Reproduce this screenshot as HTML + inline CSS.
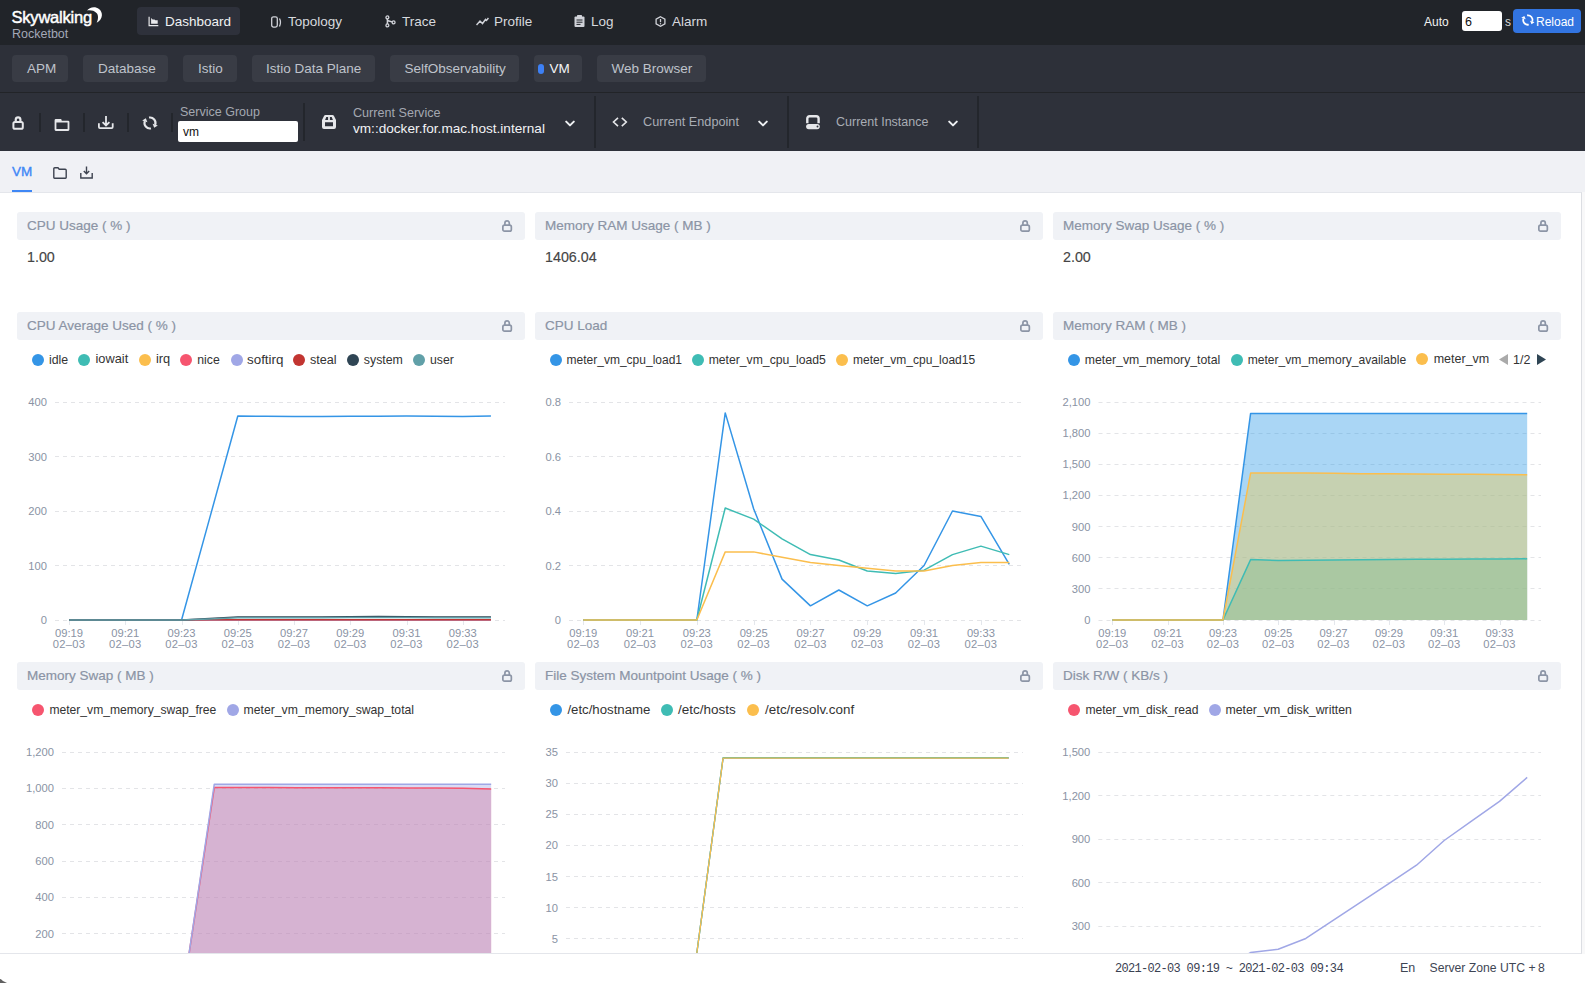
<!DOCTYPE html><html><head><meta charset="utf-8"><title>Rocketbot</title><style>
*{box-sizing:border-box;margin:0;padding:0}
html,body{width:1585px;height:983px;overflow:hidden;background:#fff;font-family:"Liberation Sans", sans-serif;}
.abs{position:absolute}
.t{position:absolute;white-space:nowrap;line-height:1}
#nav{position:absolute;left:0;top:0;width:1585px;height:45px;background:#212429}
#tabs{position:absolute;left:0;top:45px;width:1585px;height:47px;background:#2d3039}
#tline{position:absolute;left:0;top:92px;width:1585px;height:1px;background:#222428}
#tool{position:absolute;left:0;top:93px;width:1585px;height:58px;background:#2e313a}
#sub{position:absolute;left:0;top:151px;width:1585px;height:41px;background:#f0f1f5}
#content{position:absolute;left:0;top:192px;width:1582px;height:762px;background:#fff;border-top:1px solid #e4e6eb;border-right:1px solid #dcdee3;border-bottom:1px solid #e4e6eb;overflow:hidden}
#foot{position:absolute;left:0;top:954px;width:1585px;height:29px;background:#fff}
.tab{position:absolute;top:55px;height:27px;background:#393c45;border-radius:4px}
.tabt{position:absolute;top:62px;font-size:13.5px;color:#c4c7ce;line-height:1;white-space:nowrap}
.sep{position:absolute;width:2px;background:#23262c}
.ph{position:absolute;height:28px;width:508px;background:#f0f2f6;border-radius:3px}
.pt{position:absolute;font-size:13.5px;color:#8b94a5;-webkit-text-stroke:0.2px #8b94a5;line-height:1;white-space:nowrap}
.pv{position:absolute;font-size:14.3px;color:#454545;-webkit-text-stroke:0.15px #454545;line-height:1;white-space:nowrap}
.lg{position:absolute;width:12px;height:12px;border-radius:6px}
.lt{position:absolute;font-size:12.5px;color:#333;line-height:1;white-space:nowrap}
</style></head><body>
<div id="nav"></div>
<div class="t" style="left:11.5px;top:9.2px;font-size:16.5px;color:#fff;letter-spacing:-0.2px;-webkit-text-stroke:0.45px #fff">Skywalking</div>
<svg class="abs" style="left:86px;top:6px" width="18" height="18" viewBox="0 0 18 18"><path d="M1.1 4.6 C3 1.5 9 0 13 3 C17 6 17.5 13 10.7 16.8 C12.5 13 12.5 9 10.5 7 C8 4.5 4 4 1.1 4.6 Z" fill="#fff"/></svg>
<div class="t" style="left:12px;top:28.2px;font-size:12.5px;color:#a3a8b8">Rocketbot</div>
<div class="abs" style="left:137px;top:7px;width:103px;height:28px;background:#2e313b;border-radius:4px"></div>
<svg class="abs" style="left:148px;top:16px" width="11" height="11" viewBox="0 0 11 11"><path d="M1.1 0.7V9.7H10.3" stroke="#e8e9ec" stroke-width="1.2" fill="none"/><path d="M3.1 7.8V2L4.6 3.4H6.5L7.3 4.2H9.7V7.8Z" fill="#e8e9ec"/></svg>
<div class="t" style="left:165px;top:14.5px;font-size:13.5px;color:#f0f1f3">Dashboard</div>
<svg class="abs" style="left:271px;top:15.5px" width="12" height="12" viewBox="0 0 12 12"><rect x="0.7" y="0.8" width="5.6" height="10.3" rx="1.8" stroke="#d0d2d8" stroke-width="1.3" fill="none"/><path d="M8.5 2.5 Q10.5 6 8.5 10.5" stroke="#d0d2d8" stroke-width="1.3" fill="none"/></svg>
<div class="t" style="left:288px;top:14.5px;font-size:13.5px;color:#d7d9de">Topology</div>
<svg class="abs" style="left:385px;top:15px" width="12" height="13" viewBox="0 0 12 13"><path d="M2.4 2.4V10.4M2.4 5.5L8.6 7.4" stroke="#d0d2d8" stroke-width="1.5" fill="none"/><circle cx="2.4" cy="2.4" r="1.45" stroke="#d0d2d8" stroke-width="1.3" fill="#212429"/><circle cx="2.4" cy="10.4" r="1.45" stroke="#d0d2d8" stroke-width="1.3" fill="#212429"/><circle cx="8.6" cy="7.4" r="1.45" stroke="#d0d2d8" stroke-width="1.3" fill="#212429"/></svg>
<div class="t" style="left:402px;top:14.5px;font-size:13.5px;color:#d7d9de">Trace</div>
<svg class="abs" style="left:476px;top:17px" width="13" height="9" viewBox="0 0 13 9"><path d="M0.5 8 L4 4 L6.5 6.5 L9.5 2.5 L10.5 3.5 L12.5 1" stroke="#d0d2d8" stroke-width="1.5" fill="none"/></svg>
<div class="t" style="left:494px;top:14.5px;font-size:13.5px;color:#d7d9de">Profile</div>
<svg class="abs" style="left:574px;top:15px" width="11" height="12" viewBox="0 0 11 12"><rect x="0.5" y="1.5" width="10" height="10.5" rx="1" fill="#d0d2d8"/><rect x="3" y="0" width="5" height="2.5" rx="0.6" fill="#d0d2d8"/><path d="M2.5 5H8.5M2.5 7.2H8.5M2.5 9.4H6.5" stroke="#212429" stroke-width="1"/></svg>
<div class="t" style="left:591px;top:14.5px;font-size:13.5px;color:#d7d9de">Log</div>
<svg class="abs" style="left:655px;top:16px" width="11" height="11" viewBox="0 0 11 11"><path d="M5.5 0.7 L9.9 3.1 V7.9 L5.5 10.3 L1.1 7.9 V3.1Z" stroke="#d0d2d8" stroke-width="1.3" fill="none"/><path d="M5.5 3V6.2" stroke="#d0d2d8" stroke-width="1.3"/><circle cx="5.5" cy="7.8" r="0.7" fill="#d0d2d8"/></svg>
<div class="t" style="left:672px;top:14.5px;font-size:13.5px;color:#d7d9de">Alarm</div>
<div class="t" style="left:1424px;top:16px;font-size:12px;color:#f2f2f2">Auto</div>
<div class="abs" style="left:1462px;top:11px;width:40px;height:20px;background:#fff;border-radius:3px"></div>
<div class="t" style="left:1465px;top:16px;font-size:12.5px;color:#111">6</div>
<div class="t" style="left:1505px;top:16px;font-size:12px;color:#d8d8d8">s</div>
<div class="abs" style="left:1513px;top:9px;width:68px;height:24px;background:#3274e0;border-radius:4px"></div>
<svg class="abs" style="left:1516.1px;top:9.2px" width="23.8" height="21.25" viewBox="0 0 28 25"><path d="M13.04 7.58 A5.5 5.5 0 0 1 19.17 14.88" stroke="#fff" stroke-width="2.1" fill="none"/><path d="M14.96 18.42 A5.5 5.5 0 0 1 8.83 11.12" stroke="#fff" stroke-width="2.1" fill="none"/><path d="M18.2 17.8 L21.8 15.6 L16.6 13.8Z" fill="#fff"/><path d="M9.8 8.2 L6.2 10.4 L11.4 12.2Z" fill="#fff"/></svg>
<div class="t" style="left:1536px;top:16px;font-size:12px;color:#fff">Reload</div>
<div id="tabs"></div><div id="tline"></div>
<div class="tab" style="left:12px;width:56px"></div>
<div class="tabt" style="left:27px;color:#bfc3cb">APM</div>
<div class="tab" style="left:83px;width:85px"></div>
<div class="tabt" style="left:98px;color:#bfc3cb">Database</div>
<div class="tab" style="left:183px;width:54px"></div>
<div class="tabt" style="left:198px;color:#bfc3cb">Istio</div>
<div class="tab" style="left:252px;width:123px"></div>
<div class="tabt" style="left:266px;color:#bfc3cb">Istio Data Plane</div>
<div class="tab" style="left:390px;width:129px"></div>
<div class="tabt" style="left:404.5px;color:#bfc3cb">SelfObservability</div>
<div class="tab" style="left:534px;width:48px"></div>
<div class="tabt" style="left:549.5px;color:#f4f5f7">VM</div>
<div class="tab" style="left:597px;width:109px"></div>
<div class="tabt" style="left:611.5px;color:#bfc3cb">Web Browser</div>
<div class="abs" style="left:538px;top:64px;width:6px;height:10px;background:#3d80f5;border-radius:3px"></div>
<div id="tool"></div>
<svg class="abs" style="left:12px;top:115px" width="13" height="16" viewBox="0 0 13 16"><path d="M3.75 7V4.5A2.33 2.33 0 0 1 8.4 4.5V7" stroke="#e6e7ea" stroke-width="2.2" fill="none"/><rect x="1.4" y="6.9" width="9.4" height="6.9" rx="1.6" stroke="#e6e7ea" stroke-width="2" fill="none"/></svg>
<div class="sep" style="left:39px;top:113px;height:19px"></div>
<div class="sep" style="left:83px;top:113px;height:19px"></div>
<div class="sep" style="left:127px;top:113px;height:19px"></div>
<div class="sep" style="left:171px;top:113px;height:19px"></div>
<svg class="abs" style="left:53px;top:117px" width="18" height="15" viewBox="0 0 18 15"><path fill-rule="evenodd" d="M1.6 3.2 Q1.6 1.9 2.9 1.9 H8.2 L8.8 3.7 H15.1 Q16.4 3.7 16.4 5 V12.6 Q16.4 13.9 15.1 13.9 H2.9 Q1.6 13.9 1.6 12.6 Z M3.4 5.4 H14.6 V12.1 H3.4 Z" fill="#e6e7ea"/></svg>
<svg class="abs" style="left:97px;top:114px" width="18" height="17" viewBox="0 0 18 17"><path d="M9 1.9V11.2M5.6 8.1L9 11.5L12.4 8.1" stroke="#e6e7ea" stroke-width="1.8" fill="none"/><path d="M1.9 9.2V13Q1.9 14.1 3 14.1H14.6Q15.7 14.1 15.7 13V9.2" stroke="#e6e7ea" stroke-width="1.8" fill="none"/></svg>
<svg class="abs" style="left:136px;top:110px" width="28.0" height="25.0" viewBox="0 0 28 25"><path d="M13.04 7.58 A5.5 5.5 0 0 1 19.17 14.88" stroke="#e6e7ea" stroke-width="2.1" fill="none"/><path d="M14.96 18.42 A5.5 5.5 0 0 1 8.83 11.12" stroke="#e6e7ea" stroke-width="2.1" fill="none"/><path d="M18.2 17.8 L21.8 15.6 L16.6 13.8Z" fill="#e6e7ea"/><path d="M9.8 8.2 L6.2 10.4 L11.4 12.2Z" fill="#e6e7ea"/></svg>
<div class="t" style="left:180px;top:106px;font-size:12.5px;color:#a4a8b1">Service Group</div>
<div class="abs" style="left:178px;top:121px;width:120px;height:21px;background:#fff;border-radius:2px"></div>
<div class="t" style="left:183px;top:126px;font-size:12px;color:#111">vm</div>
<div class="sep" style="left:303px;top:103px;height:38px"></div>
<svg class="abs" style="left:321px;top:114px" width="16" height="16" viewBox="0 0 16 16"><path fill-rule="evenodd" d="M4.5 0.9 H11.5 Q12.5 0.9 13 1.9 L15 6 V12.9 Q15 14.9 13 14.9 H3 Q1 14.9 1 12.9 V6 L3 1.9 Q3.5 0.9 4.5 0.9 Z M4 8.3 H12 V12.3 H4 Z M4.1 5.9 L5.3 3.0 H7.1 V5.9 Z M8.9 5.9 V3.0 H10.7 L11.9 5.9 Z" fill="#e6e7ea"/></svg>
<div class="t" style="left:353px;top:107px;font-size:12.6px;color:#a4a8b1">Current Service</div>
<div class="t" style="left:353px;top:122px;font-size:13.6px;color:#f2f3f5">vm::docker.for.mac.host.internal</div>
<svg class="abs" style="left:565px;top:120px" width="10" height="8" viewBox="0 0 10 8"><path d="M1.2 1.6L5 5.4L8.8 1.6" stroke="#eef0f2" stroke-width="2" stroke-linecap="round" stroke-linejoin="round" fill="none"/></svg>
<div class="sep" style="left:594px;top:96px;height:52px"></div>
<svg class="abs" style="left:612px;top:117px" width="16" height="10" viewBox="0 0 16 10"><path d="M6 0.9L1.5 5L6 9.1M9.8 0.9L14.3 5L9.8 9.1" stroke="#e6e7ea" stroke-width="1.6" fill="none"/></svg>
<div class="t" style="left:643px;top:116px;font-size:12.7px;color:#a9adb5">Current Endpoint</div>
<svg class="abs" style="left:758px;top:120px" width="10" height="8" viewBox="0 0 10 8"><path d="M1.2 1.6L5 5.4L8.8 1.6" stroke="#eef0f2" stroke-width="2" stroke-linecap="round" stroke-linejoin="round" fill="none"/></svg>
<div class="sep" style="left:787px;top:96px;height:52px"></div>
<svg class="abs" style="left:805px;top:114px" width="16" height="16" viewBox="0 0 16 16"><path d="M2.3 9.2V4.6Q2.3 2.2 4.7 2.2H11.2Q13.6 2.2 13.6 4.6V9.2" stroke="#e6e7ea" stroke-width="2.4" fill="none"/><rect x="1.1" y="9.9" width="13.7" height="5.3" rx="2.65" fill="#e6e7ea"/><circle cx="12.5" cy="12.5" r="0.95" fill="#2e313a"/></svg>
<div class="t" style="left:836px;top:116px;font-size:12.5px;color:#a9adb5">Current Instance</div>
<svg class="abs" style="left:948px;top:120px" width="10" height="8" viewBox="0 0 10 8"><path d="M1.2 1.6L5 5.4L8.8 1.6" stroke="#eef0f2" stroke-width="2" stroke-linecap="round" stroke-linejoin="round" fill="none"/></svg>
<div class="sep" style="left:977px;top:96px;height:52px"></div>
<div id="sub"></div>
<div class="t" style="left:12px;top:164.5px;font-size:13.5px;-webkit-text-stroke:0.35px #3f87f5;color:#3f87f5">VM</div>
<div class="abs" style="left:12px;top:190px;width:20px;height:2px;background:#3f87f5"></div>
<svg class="abs" style="left:53px;top:167px" width="14" height="12" viewBox="0 0 14 12"><path d="M0.8 10.5V1.8Q0.8 0.8 1.8 0.8H5L6.2 2.2H12.2Q13.2 2.2 13.2 3.2V10.5Q13.2 11.2 12.5 11.2H1.5Q0.8 11.2 0.8 10.5Z" stroke="#3d4350" stroke-width="1.4" fill="none"/></svg>
<svg class="abs" style="left:80px;top:166px" width="13" height="13" viewBox="0 0 13 13"><path d="M6.5 0.5V7.5M3.8 5L6.5 7.7L9.2 5" stroke="#3d4350" stroke-width="1.4" fill="none"/><path d="M0.8 7V12H12.2V7" stroke="#3d4350" stroke-width="1.4" fill="none"/></svg>
<div id="content"></div><div class="abs" style="left:1582px;top:192px;width:3px;height:762px;background:#f8f8f9"></div>
<div class="ph" style="left:17px;top:212px"></div>
<div class="pt" style="left:27px;top:218.9px">CPU Usage ( % )</div>
<svg class="abs" style="left:502px;top:220.2px" width="11" height="13" viewBox="0 0 11 13"><path d="M2.9 5.5V3.1A2.2 2.2 0 0 1 7.3 3.1V5.5" stroke="#8c95a6" stroke-width="1.7" fill="none"/><rect x="0.85" y="5.1" width="8.5" height="6.1" rx="1.7" stroke="#8c95a6" stroke-width="1.7" fill="none"/></svg>
<div class="pv" style="left:27px;top:249.6px">1.00</div>
<div class="ph" style="left:535px;top:212px"></div>
<div class="pt" style="left:545px;top:218.9px">Memory RAM Usage ( MB )</div>
<svg class="abs" style="left:1020px;top:220.2px" width="11" height="13" viewBox="0 0 11 13"><path d="M2.9 5.5V3.1A2.2 2.2 0 0 1 7.3 3.1V5.5" stroke="#8c95a6" stroke-width="1.7" fill="none"/><rect x="0.85" y="5.1" width="8.5" height="6.1" rx="1.7" stroke="#8c95a6" stroke-width="1.7" fill="none"/></svg>
<div class="pv" style="left:545px;top:249.6px">1406.04</div>
<div class="ph" style="left:1053px;top:212px"></div>
<div class="pt" style="left:1063px;top:218.9px">Memory Swap Usage ( % )</div>
<svg class="abs" style="left:1538px;top:220.2px" width="11" height="13" viewBox="0 0 11 13"><path d="M2.9 5.5V3.1A2.2 2.2 0 0 1 7.3 3.1V5.5" stroke="#8c95a6" stroke-width="1.7" fill="none"/><rect x="0.85" y="5.1" width="8.5" height="6.1" rx="1.7" stroke="#8c95a6" stroke-width="1.7" fill="none"/></svg>
<div class="pv" style="left:1063px;top:249.6px">2.00</div>
<div class="ph" style="left:17px;top:312px"></div>
<div class="pt" style="left:27px;top:318.9px">CPU Average Used ( % )</div>
<svg class="abs" style="left:502px;top:320.2px" width="11" height="13" viewBox="0 0 11 13"><path d="M2.9 5.5V3.1A2.2 2.2 0 0 1 7.3 3.1V5.5" stroke="#8c95a6" stroke-width="1.7" fill="none"/><rect x="0.85" y="5.1" width="8.5" height="6.1" rx="1.7" stroke="#8c95a6" stroke-width="1.7" fill="none"/></svg>
<div class="ph" style="left:535px;top:312px"></div>
<div class="pt" style="left:545px;top:318.9px">CPU Load</div>
<svg class="abs" style="left:1020px;top:320.2px" width="11" height="13" viewBox="0 0 11 13"><path d="M2.9 5.5V3.1A2.2 2.2 0 0 1 7.3 3.1V5.5" stroke="#8c95a6" stroke-width="1.7" fill="none"/><rect x="0.85" y="5.1" width="8.5" height="6.1" rx="1.7" stroke="#8c95a6" stroke-width="1.7" fill="none"/></svg>
<div class="ph" style="left:1053px;top:312px"></div>
<div class="pt" style="left:1063px;top:318.9px">Memory RAM ( MB )</div>
<svg class="abs" style="left:1538px;top:320.2px" width="11" height="13" viewBox="0 0 11 13"><path d="M2.9 5.5V3.1A2.2 2.2 0 0 1 7.3 3.1V5.5" stroke="#8c95a6" stroke-width="1.7" fill="none"/><rect x="0.85" y="5.1" width="8.5" height="6.1" rx="1.7" stroke="#8c95a6" stroke-width="1.7" fill="none"/></svg>
<div class="lg" style="left:31.8px;top:353.9px;background:#3495e6"></div>
<div class="lt" style="left:49px;top:353.72px;font-size:12.35px">idle</div>
<div class="lg" style="left:78.3px;top:353.9px;background:#3fbcb4"></div>
<div class="lt" style="left:95.5px;top:353.0px;font-size:12.8px">iowait</div>
<div class="lg" style="left:138.7px;top:353.9px;background:#fbbe4d"></div>
<div class="lt" style="left:156px;top:353.0px;font-size:12.79px">irq</div>
<div class="lg" style="left:180.3px;top:353.9px;background:#f6556f"></div>
<div class="lt" style="left:197.3px;top:353.77px;font-size:12.26px">nice</div>
<div class="lg" style="left:230.7px;top:353.9px;background:#a0a7e6"></div>
<div class="lt" style="left:247px;top:352.7px;font-size:13.39px">softirq</div>
<div class="lg" style="left:293px;top:353.9px;background:#c23531"></div>
<div class="lt" style="left:310px;top:353.59px;font-size:12.61px">steal</div>
<div class="lg" style="left:346.9px;top:353.9px;background:#2f4554"></div>
<div class="lt" style="left:363.8px;top:353.72px;font-size:12.35px">system</div>
<div class="lg" style="left:413px;top:353.9px;background:#61a0a8"></div>
<div class="lt" style="left:430px;top:353.78px;font-size:12.24px">user</div>
<svg class="abs" style="left:0;top:0;overflow:visible" width="1585" height="983"><line x1="55" y1="620.5" x2="505" y2="620.5" stroke="#e3e4e7" stroke-width="1" stroke-dasharray="4 4"/><text x="47" y="624.0" text-anchor="end" font-size="11.2" fill="#8a93a4" font-family="Liberation Sans">0</text><line x1="55" y1="565.5" x2="505" y2="565.5" stroke="#e3e4e7" stroke-width="1" stroke-dasharray="4 4"/><text x="47" y="569.5" text-anchor="end" font-size="11.2" fill="#8a93a4" font-family="Liberation Sans">100</text><line x1="55" y1="511.5" x2="505" y2="511.5" stroke="#e3e4e7" stroke-width="1" stroke-dasharray="4 4"/><text x="47" y="515.0" text-anchor="end" font-size="11.2" fill="#8a93a4" font-family="Liberation Sans">200</text><line x1="55" y1="456.5" x2="505" y2="456.5" stroke="#e3e4e7" stroke-width="1" stroke-dasharray="4 4"/><text x="47" y="460.5" text-anchor="end" font-size="11.2" fill="#8a93a4" font-family="Liberation Sans">300</text><line x1="55" y1="402.5" x2="505" y2="402.5" stroke="#e3e4e7" stroke-width="1" stroke-dasharray="4 4"/><text x="47" y="406.0" text-anchor="end" font-size="11.2" fill="#8a93a4" font-family="Liberation Sans">400</text><line x1="69.5" y1="620" x2="69.5" y2="625" stroke="#e4e7ec" stroke-width="1"/><text x="69.0625" y="637" text-anchor="middle" font-size="11.2" fill="#8a93a4" font-family="Liberation Sans">09:19</text><text x="69.0625" y="647.7" text-anchor="middle" font-size="11.2" fill="#8a93a4" font-family="Liberation Sans" letter-spacing="0.3">02–03</text><line x1="125.5" y1="620" x2="125.5" y2="625" stroke="#e4e7ec" stroke-width="1"/><text x="125.3125" y="637" text-anchor="middle" font-size="11.2" fill="#8a93a4" font-family="Liberation Sans">09:21</text><text x="125.3125" y="647.7" text-anchor="middle" font-size="11.2" fill="#8a93a4" font-family="Liberation Sans" letter-spacing="0.3">02–03</text><line x1="182.5" y1="620" x2="182.5" y2="625" stroke="#e4e7ec" stroke-width="1"/><text x="181.5625" y="637" text-anchor="middle" font-size="11.2" fill="#8a93a4" font-family="Liberation Sans">09:23</text><text x="181.5625" y="647.7" text-anchor="middle" font-size="11.2" fill="#8a93a4" font-family="Liberation Sans" letter-spacing="0.3">02–03</text><line x1="238.5" y1="620" x2="238.5" y2="625" stroke="#e4e7ec" stroke-width="1"/><text x="237.8125" y="637" text-anchor="middle" font-size="11.2" fill="#8a93a4" font-family="Liberation Sans">09:25</text><text x="237.8125" y="647.7" text-anchor="middle" font-size="11.2" fill="#8a93a4" font-family="Liberation Sans" letter-spacing="0.3">02–03</text><line x1="294.5" y1="620" x2="294.5" y2="625" stroke="#e4e7ec" stroke-width="1"/><text x="294.0625" y="637" text-anchor="middle" font-size="11.2" fill="#8a93a4" font-family="Liberation Sans">09:27</text><text x="294.0625" y="647.7" text-anchor="middle" font-size="11.2" fill="#8a93a4" font-family="Liberation Sans" letter-spacing="0.3">02–03</text><line x1="350.5" y1="620" x2="350.5" y2="625" stroke="#e4e7ec" stroke-width="1"/><text x="350.3125" y="637" text-anchor="middle" font-size="11.2" fill="#8a93a4" font-family="Liberation Sans">09:29</text><text x="350.3125" y="647.7" text-anchor="middle" font-size="11.2" fill="#8a93a4" font-family="Liberation Sans" letter-spacing="0.3">02–03</text><line x1="407.5" y1="620" x2="407.5" y2="625" stroke="#e4e7ec" stroke-width="1"/><text x="406.5625" y="637" text-anchor="middle" font-size="11.2" fill="#8a93a4" font-family="Liberation Sans">09:31</text><text x="406.5625" y="647.7" text-anchor="middle" font-size="11.2" fill="#8a93a4" font-family="Liberation Sans" letter-spacing="0.3">02–03</text><line x1="463.5" y1="620" x2="463.5" y2="625" stroke="#e4e7ec" stroke-width="1"/><text x="462.8125" y="637" text-anchor="middle" font-size="11.2" fill="#8a93a4" font-family="Liberation Sans">09:33</text><text x="462.8125" y="647.7" text-anchor="middle" font-size="11.2" fill="#8a93a4" font-family="Liberation Sans" letter-spacing="0.3">02–03</text><polyline points="69.06,620.00 97.19,620.00 125.31,620.00 153.44,620.00 181.56,620.00 209.69,518.14 237.81,416.06 265.94,416.28 294.06,416.39 322.19,416.39 350.31,416.33 378.44,416.17 406.56,416.01 434.69,416.17 462.81,416.39 490.94,416.01" fill="none" stroke="#3495e6" stroke-width="1.5" stroke-linejoin="round"/><polyline points="69.06,620.00 97.19,620.00 125.31,620.00 153.44,620.00 181.56,620.00 209.69,619.84 237.81,619.84 265.94,619.84 294.06,619.84 322.19,619.84 350.31,619.84 378.44,619.84 406.56,619.84 434.69,619.84 462.81,619.84 490.94,619.84" fill="none" stroke="#3fbcb4" stroke-width="1.5" stroke-linejoin="round"/><polyline points="69.06,620.00 97.19,620.00 125.31,620.00 153.44,620.00 181.56,620.00 209.69,620.00 237.81,620.00 265.94,620.00 294.06,620.00 322.19,620.00 350.31,620.00 378.44,620.00 406.56,620.00 434.69,620.00 462.81,620.00 490.94,620.00" fill="none" stroke="#fbbe4d" stroke-width="1.5" stroke-linejoin="round"/><polyline points="69.06,620.00 97.19,620.00 125.31,620.00 153.44,620.00 181.56,620.00 209.69,620.00 237.81,620.00 265.94,620.00 294.06,620.00 322.19,620.00 350.31,620.00 378.44,620.00 406.56,620.00 434.69,620.00 462.81,620.00 490.94,620.00" fill="none" stroke="#f6556f" stroke-width="1.5" stroke-linejoin="round"/><polyline points="69.06,620.00 97.19,620.00 125.31,620.00 153.44,620.00 181.56,620.00 209.69,619.89 237.81,619.89 265.94,619.89 294.06,619.89 322.19,619.89 350.31,619.89 378.44,619.89 406.56,619.89 434.69,619.89 462.81,619.89 490.94,619.89" fill="none" stroke="#a0a7e6" stroke-width="1.5" stroke-linejoin="round"/><polyline points="69.06,620.00 97.19,620.00 125.31,620.00 153.44,620.00 181.56,620.00 209.69,619.84 237.81,619.84 265.94,619.84 294.06,619.84 322.19,619.84 350.31,619.84 378.44,619.84 406.56,619.84 434.69,619.84 462.81,619.84 490.94,619.84" fill="none" stroke="#c23531" stroke-width="1.5" stroke-linejoin="round"/><polyline points="69.06,620.00 97.19,620.00 125.31,620.00 153.44,620.00 181.56,620.00 209.69,618.47 237.81,617.06 265.94,617.00 294.06,616.95 322.19,616.89 350.31,616.78 378.44,616.62 406.56,616.73 434.69,616.89 462.81,616.95 490.94,616.89" fill="none" stroke="#2f4554" stroke-width="1.5" stroke-linejoin="round"/><polyline points="69.06,620.00 97.19,620.00 125.31,620.00 153.44,620.00 181.56,620.00 209.69,618.91 237.81,617.82 265.94,617.77 294.06,617.71 322.19,617.66 350.31,617.55 378.44,617.38 406.56,617.55 434.69,617.66 462.81,617.71 490.94,617.66" fill="none" stroke="#61a0a8" stroke-width="1.5" stroke-linejoin="round"/></svg>
<div class="lg" style="left:550.1px;top:353.9px;background:#3495e6"></div>
<div class="lt" style="left:566.6px;top:353.9px;font-size:12.0px">meter_vm_cpu_load1</div>
<div class="lg" style="left:691.8px;top:353.9px;background:#3fbcb4"></div>
<div class="lt" style="left:708.7px;top:353.8px;font-size:12.19px">meter_vm_cpu_load5</div>
<div class="lg" style="left:835.7px;top:353.9px;background:#fbbe4d"></div>
<div class="lt" style="left:853px;top:353.9px;font-size:12.0px">meter_vm_cpu_load15</div>
<svg class="abs" style="left:0;top:0;overflow:visible" width="1585" height="983"><line x1="569" y1="620.5" x2="1023.5" y2="620.5" stroke="#e3e4e7" stroke-width="1" stroke-dasharray="4 4"/><text x="561" y="624.0" text-anchor="end" font-size="11.2" fill="#8a93a4" font-family="Liberation Sans">0</text><line x1="569" y1="565.5" x2="1023.5" y2="565.5" stroke="#e3e4e7" stroke-width="1" stroke-dasharray="4 4"/><text x="561" y="569.5" text-anchor="end" font-size="11.2" fill="#8a93a4" font-family="Liberation Sans">0.2</text><line x1="569" y1="511.5" x2="1023.5" y2="511.5" stroke="#e3e4e7" stroke-width="1" stroke-dasharray="4 4"/><text x="561" y="515.0" text-anchor="end" font-size="11.2" fill="#8a93a4" font-family="Liberation Sans">0.4</text><line x1="569" y1="456.5" x2="1023.5" y2="456.5" stroke="#e3e4e7" stroke-width="1" stroke-dasharray="4 4"/><text x="561" y="460.5" text-anchor="end" font-size="11.2" fill="#8a93a4" font-family="Liberation Sans">0.6</text><line x1="569" y1="402.5" x2="1023.5" y2="402.5" stroke="#e3e4e7" stroke-width="1" stroke-dasharray="4 4"/><text x="561" y="406.0" text-anchor="end" font-size="11.2" fill="#8a93a4" font-family="Liberation Sans">0.8</text><line x1="583.5" y1="620" x2="583.5" y2="625" stroke="#e4e7ec" stroke-width="1"/><text x="583.203125" y="637" text-anchor="middle" font-size="11.2" fill="#8a93a4" font-family="Liberation Sans">09:19</text><text x="583.203125" y="647.7" text-anchor="middle" font-size="11.2" fill="#8a93a4" font-family="Liberation Sans" letter-spacing="0.3">02–03</text><line x1="640.5" y1="620" x2="640.5" y2="625" stroke="#e4e7ec" stroke-width="1"/><text x="640.015625" y="637" text-anchor="middle" font-size="11.2" fill="#8a93a4" font-family="Liberation Sans">09:21</text><text x="640.015625" y="647.7" text-anchor="middle" font-size="11.2" fill="#8a93a4" font-family="Liberation Sans" letter-spacing="0.3">02–03</text><line x1="697.5" y1="620" x2="697.5" y2="625" stroke="#e4e7ec" stroke-width="1"/><text x="696.828125" y="637" text-anchor="middle" font-size="11.2" fill="#8a93a4" font-family="Liberation Sans">09:23</text><text x="696.828125" y="647.7" text-anchor="middle" font-size="11.2" fill="#8a93a4" font-family="Liberation Sans" letter-spacing="0.3">02–03</text><line x1="754.5" y1="620" x2="754.5" y2="625" stroke="#e4e7ec" stroke-width="1"/><text x="753.640625" y="637" text-anchor="middle" font-size="11.2" fill="#8a93a4" font-family="Liberation Sans">09:25</text><text x="753.640625" y="647.7" text-anchor="middle" font-size="11.2" fill="#8a93a4" font-family="Liberation Sans" letter-spacing="0.3">02–03</text><line x1="810.5" y1="620" x2="810.5" y2="625" stroke="#e4e7ec" stroke-width="1"/><text x="810.453125" y="637" text-anchor="middle" font-size="11.2" fill="#8a93a4" font-family="Liberation Sans">09:27</text><text x="810.453125" y="647.7" text-anchor="middle" font-size="11.2" fill="#8a93a4" font-family="Liberation Sans" letter-spacing="0.3">02–03</text><line x1="867.5" y1="620" x2="867.5" y2="625" stroke="#e4e7ec" stroke-width="1"/><text x="867.265625" y="637" text-anchor="middle" font-size="11.2" fill="#8a93a4" font-family="Liberation Sans">09:29</text><text x="867.265625" y="647.7" text-anchor="middle" font-size="11.2" fill="#8a93a4" font-family="Liberation Sans" letter-spacing="0.3">02–03</text><line x1="924.5" y1="620" x2="924.5" y2="625" stroke="#e4e7ec" stroke-width="1"/><text x="924.078125" y="637" text-anchor="middle" font-size="11.2" fill="#8a93a4" font-family="Liberation Sans">09:31</text><text x="924.078125" y="647.7" text-anchor="middle" font-size="11.2" fill="#8a93a4" font-family="Liberation Sans" letter-spacing="0.3">02–03</text><line x1="981.5" y1="620" x2="981.5" y2="625" stroke="#e4e7ec" stroke-width="1"/><text x="980.890625" y="637" text-anchor="middle" font-size="11.2" fill="#8a93a4" font-family="Liberation Sans">09:33</text><text x="980.890625" y="647.7" text-anchor="middle" font-size="11.2" fill="#8a93a4" font-family="Liberation Sans" letter-spacing="0.3">02–03</text><polyline points="583.20,620.00 611.61,620.00 640.02,620.00 668.42,620.00 696.83,620.00 725.23,412.90 753.64,508.82 782.05,579.12 810.45,605.83 838.86,590.02 867.27,605.83 895.67,593.02 924.08,565.50 952.48,511.00 980.89,516.45 1009.30,564.41" fill="none" stroke="#3495e6" stroke-width="1.5" stroke-linejoin="round"/><polyline points="583.20,620.00 611.61,620.00 640.02,620.00 668.42,620.00 696.83,620.00 725.23,508.00 753.64,519.17 782.05,538.80 810.45,554.60 838.86,560.05 867.27,570.95 895.67,573.40 924.08,570.13 952.48,554.60 980.89,546.15 1009.30,554.60" fill="none" stroke="#3fbcb4" stroke-width="1.5" stroke-linejoin="round"/><polyline points="583.20,620.00 611.61,620.00 640.02,620.00 668.42,620.00 696.83,620.00 725.23,551.88 753.64,551.88 782.05,557.33 810.45,562.50 838.86,565.50 867.27,568.23 895.67,570.95 924.08,570.95 952.48,565.50 980.89,562.50 1009.30,562.50" fill="none" stroke="#fbbe4d" stroke-width="1.5" stroke-linejoin="round"/></svg>
<div class="lg" style="left:1067.6px;top:353.9px;background:#3495e6"></div>
<div class="lt" style="left:1084.8px;top:353.77px;font-size:12.25px">meter_vm_memory_total</div>
<div class="lg" style="left:1230.5px;top:353.9px;background:#3fbcb4"></div>
<div class="lt" style="left:1247.7px;top:353.85px;font-size:12.09px">meter_vm_memory_available</div>
<div class="lg" style="left:1416.2px;top:353.4px;background:#fbbe4d"></div>
<div class="lt" style="left:1433.7px;top:353.2px;width:55px;height:16px;overflow:hidden">meter_vm_memory_used</div>
<svg class="abs" style="left:1498px;top:353px" width="50" height="13" viewBox="0 0 50 13"><path d="M10 1V12L1 6.5Z" fill="#aaaaaa"/><path d="M39 1V12L48 6.5Z" fill="#2f4554"/></svg>
<div class="lt" style="left:1513px;top:353.5px;color:#333">1/2</div>
<svg class="abs" style="left:0;top:0;overflow:visible" width="1585" height="983"><line x1="1098.5" y1="620.5" x2="1541" y2="620.5" stroke="#e3e4e7" stroke-width="1" stroke-dasharray="4 4"/><text x="1090.5" y="624.0" text-anchor="end" font-size="11.2" fill="#8a93a4" font-family="Liberation Sans">0</text><line x1="1098.5" y1="588.5" x2="1541" y2="588.5" stroke="#e3e4e7" stroke-width="1" stroke-dasharray="4 4"/><text x="1090.5" y="592.8571428571429" text-anchor="end" font-size="11.2" fill="#8a93a4" font-family="Liberation Sans">300</text><line x1="1098.5" y1="557.5" x2="1541" y2="557.5" stroke="#e3e4e7" stroke-width="1" stroke-dasharray="4 4"/><text x="1090.5" y="561.7142857142857" text-anchor="end" font-size="11.2" fill="#8a93a4" font-family="Liberation Sans">600</text><line x1="1098.5" y1="526.5" x2="1541" y2="526.5" stroke="#e3e4e7" stroke-width="1" stroke-dasharray="4 4"/><text x="1090.5" y="530.5714285714286" text-anchor="end" font-size="11.2" fill="#8a93a4" font-family="Liberation Sans">900</text><line x1="1098.5" y1="495.5" x2="1541" y2="495.5" stroke="#e3e4e7" stroke-width="1" stroke-dasharray="4 4"/><text x="1090.5" y="499.42857142857144" text-anchor="end" font-size="11.2" fill="#8a93a4" font-family="Liberation Sans">1,200</text><line x1="1098.5" y1="464.5" x2="1541" y2="464.5" stroke="#e3e4e7" stroke-width="1" stroke-dasharray="4 4"/><text x="1090.5" y="468.2857142857143" text-anchor="end" font-size="11.2" fill="#8a93a4" font-family="Liberation Sans">1,500</text><line x1="1098.5" y1="433.5" x2="1541" y2="433.5" stroke="#e3e4e7" stroke-width="1" stroke-dasharray="4 4"/><text x="1090.5" y="437.14285714285717" text-anchor="end" font-size="11.2" fill="#8a93a4" font-family="Liberation Sans">1,800</text><line x1="1098.5" y1="402.5" x2="1541" y2="402.5" stroke="#e3e4e7" stroke-width="1" stroke-dasharray="4 4"/><text x="1090.5" y="406.0" text-anchor="end" font-size="11.2" fill="#8a93a4" font-family="Liberation Sans">2,100</text><line x1="1112.5" y1="620" x2="1112.5" y2="625" stroke="#e4e7ec" stroke-width="1"/><text x="1112.328125" y="637" text-anchor="middle" font-size="11.2" fill="#8a93a4" font-family="Liberation Sans">09:19</text><text x="1112.328125" y="647.7" text-anchor="middle" font-size="11.2" fill="#8a93a4" font-family="Liberation Sans" letter-spacing="0.3">02–03</text><line x1="1168.5" y1="620" x2="1168.5" y2="625" stroke="#e4e7ec" stroke-width="1"/><text x="1167.640625" y="637" text-anchor="middle" font-size="11.2" fill="#8a93a4" font-family="Liberation Sans">09:21</text><text x="1167.640625" y="647.7" text-anchor="middle" font-size="11.2" fill="#8a93a4" font-family="Liberation Sans" letter-spacing="0.3">02–03</text><line x1="1223.5" y1="620" x2="1223.5" y2="625" stroke="#e4e7ec" stroke-width="1"/><text x="1222.953125" y="637" text-anchor="middle" font-size="11.2" fill="#8a93a4" font-family="Liberation Sans">09:23</text><text x="1222.953125" y="647.7" text-anchor="middle" font-size="11.2" fill="#8a93a4" font-family="Liberation Sans" letter-spacing="0.3">02–03</text><line x1="1278.5" y1="620" x2="1278.5" y2="625" stroke="#e4e7ec" stroke-width="1"/><text x="1278.265625" y="637" text-anchor="middle" font-size="11.2" fill="#8a93a4" font-family="Liberation Sans">09:25</text><text x="1278.265625" y="647.7" text-anchor="middle" font-size="11.2" fill="#8a93a4" font-family="Liberation Sans" letter-spacing="0.3">02–03</text><line x1="1334.5" y1="620" x2="1334.5" y2="625" stroke="#e4e7ec" stroke-width="1"/><text x="1333.578125" y="637" text-anchor="middle" font-size="11.2" fill="#8a93a4" font-family="Liberation Sans">09:27</text><text x="1333.578125" y="647.7" text-anchor="middle" font-size="11.2" fill="#8a93a4" font-family="Liberation Sans" letter-spacing="0.3">02–03</text><line x1="1389.5" y1="620" x2="1389.5" y2="625" stroke="#e4e7ec" stroke-width="1"/><text x="1388.890625" y="637" text-anchor="middle" font-size="11.2" fill="#8a93a4" font-family="Liberation Sans">09:29</text><text x="1388.890625" y="647.7" text-anchor="middle" font-size="11.2" fill="#8a93a4" font-family="Liberation Sans" letter-spacing="0.3">02–03</text><line x1="1444.5" y1="620" x2="1444.5" y2="625" stroke="#e4e7ec" stroke-width="1"/><text x="1444.203125" y="637" text-anchor="middle" font-size="11.2" fill="#8a93a4" font-family="Liberation Sans">09:31</text><text x="1444.203125" y="647.7" text-anchor="middle" font-size="11.2" fill="#8a93a4" font-family="Liberation Sans" letter-spacing="0.3">02–03</text><line x1="1500.5" y1="620" x2="1500.5" y2="625" stroke="#e4e7ec" stroke-width="1"/><text x="1499.515625" y="637" text-anchor="middle" font-size="11.2" fill="#8a93a4" font-family="Liberation Sans">09:33</text><text x="1499.515625" y="647.7" text-anchor="middle" font-size="11.2" fill="#8a93a4" font-family="Liberation Sans" letter-spacing="0.3">02–03</text><polygon points="1112.33,620 1112.33,620.00 1139.98,620.00 1167.64,620.00 1195.30,620.00 1222.95,620.00 1250.61,413.42 1278.27,413.42 1305.92,413.42 1333.58,413.42 1361.23,413.42 1388.89,413.42 1416.55,413.42 1444.20,413.42 1471.86,413.42 1499.52,413.42 1527.17,413.42 1527.17,620" fill="#2a98e6" fill-opacity="0.4"/><polygon points="1112.33,620 1112.33,620.00 1139.98,620.00 1167.64,620.00 1195.30,620.00 1222.95,620.00 1250.61,473.11 1278.27,473.01 1305.92,473.11 1333.58,473.21 1361.23,473.63 1388.89,473.84 1416.55,474.04 1444.20,474.15 1471.86,474.36 1499.52,474.56 1527.17,474.87 1527.17,620" fill="#f0cb4c" fill-opacity="0.4"/><polygon points="1112.33,620 1112.33,620.00 1139.98,620.00 1167.64,620.00 1195.30,620.00 1222.95,620.00 1250.61,559.58 1278.27,560.41 1305.92,560.31 1333.58,560.00 1361.23,559.69 1388.89,559.38 1416.55,559.27 1444.20,559.17 1471.86,559.06 1499.52,559.06 1527.17,558.86 1527.17,620" fill="#80bc8c" fill-opacity="0.4"/><polyline points="1112.33,620.00 1139.98,620.00 1167.64,620.00 1195.30,620.00 1222.95,620.00 1250.61,413.42 1278.27,413.42 1305.92,413.42 1333.58,413.42 1361.23,413.42 1388.89,413.42 1416.55,413.42 1444.20,413.42 1471.86,413.42 1499.52,413.42 1527.17,413.42" fill="none" stroke="#3495e6" stroke-width="1.5" stroke-linejoin="round"/><polyline points="1112.33,620.00 1139.98,620.00 1167.64,620.00 1195.30,620.00 1222.95,620.00 1250.61,559.58 1278.27,560.41 1305.92,560.31 1333.58,560.00 1361.23,559.69 1388.89,559.38 1416.55,559.27 1444.20,559.17 1471.86,559.06 1499.52,559.06 1527.17,558.86" fill="none" stroke="#3fbcb4" stroke-width="1.5" stroke-linejoin="round"/><polyline points="1112.33,620.00 1139.98,620.00 1167.64,620.00 1195.30,620.00 1222.95,620.00 1250.61,473.11 1278.27,473.01 1305.92,473.11 1333.58,473.21 1361.23,473.63 1388.89,473.84 1416.55,474.04 1444.20,474.15 1471.86,474.36 1499.52,474.56 1527.17,474.87" fill="none" stroke="#fbbe4d" stroke-width="1.5" stroke-linejoin="round"/></svg>
<div class="ph" style="left:17px;top:662px"></div>
<div class="pt" style="left:27px;top:668.9px">Memory Swap ( MB )</div>
<svg class="abs" style="left:502px;top:670.2px" width="11" height="13" viewBox="0 0 11 13"><path d="M2.9 5.5V3.1A2.2 2.2 0 0 1 7.3 3.1V5.5" stroke="#8c95a6" stroke-width="1.7" fill="none"/><rect x="0.85" y="5.1" width="8.5" height="6.1" rx="1.7" stroke="#8c95a6" stroke-width="1.7" fill="none"/></svg>
<div class="ph" style="left:535px;top:662px"></div>
<div class="pt" style="left:545px;top:668.9px">File System Mountpoint Usage ( % )</div>
<svg class="abs" style="left:1020px;top:670.2px" width="11" height="13" viewBox="0 0 11 13"><path d="M2.9 5.5V3.1A2.2 2.2 0 0 1 7.3 3.1V5.5" stroke="#8c95a6" stroke-width="1.7" fill="none"/><rect x="0.85" y="5.1" width="8.5" height="6.1" rx="1.7" stroke="#8c95a6" stroke-width="1.7" fill="none"/></svg>
<div class="ph" style="left:1053px;top:662px"></div>
<div class="pt" style="left:1063px;top:668.9px">Disk R/W ( KB/s )</div>
<svg class="abs" style="left:1538px;top:670.2px" width="11" height="13" viewBox="0 0 11 13"><path d="M2.9 5.5V3.1A2.2 2.2 0 0 1 7.3 3.1V5.5" stroke="#8c95a6" stroke-width="1.7" fill="none"/><rect x="0.85" y="5.1" width="8.5" height="6.1" rx="1.7" stroke="#8c95a6" stroke-width="1.7" fill="none"/></svg>
<div class="lg" style="left:31.7px;top:703.9px;background:#f6556f"></div>
<div class="lt" style="left:49.4px;top:703.85px;font-size:12.11px">meter_vm_memory_swap_free</div>
<div class="lg" style="left:226.6px;top:703.9px;background:#a0a7e6"></div>
<div class="lt" style="left:243.6px;top:703.79px;font-size:12.22px">meter_vm_memory_swap_total</div>
<svg class="abs" style="left:0;top:0;overflow:visible" width="1585" height="983"><defs><clipPath id="c62752"><rect x="0" y="0" width="1585" height="953"/></clipPath></defs><g clip-path="url(#c62752)"><line x1="62" y1="970.5" x2="505" y2="970.5" stroke="#e3e4e7" stroke-width="1" stroke-dasharray="4 4"/><text x="54" y="974.0" text-anchor="end" font-size="11.2" fill="#8a93a4" font-family="Liberation Sans">0</text><line x1="62" y1="933.5" x2="505" y2="933.5" stroke="#e3e4e7" stroke-width="1" stroke-dasharray="4 4"/><text x="54" y="937.6666666666666" text-anchor="end" font-size="11.2" fill="#8a93a4" font-family="Liberation Sans">200</text><line x1="62" y1="897.5" x2="505" y2="897.5" stroke="#e3e4e7" stroke-width="1" stroke-dasharray="4 4"/><text x="54" y="901.3333333333334" text-anchor="end" font-size="11.2" fill="#8a93a4" font-family="Liberation Sans">400</text><line x1="62" y1="861.5" x2="505" y2="861.5" stroke="#e3e4e7" stroke-width="1" stroke-dasharray="4 4"/><text x="54" y="865.0" text-anchor="end" font-size="11.2" fill="#8a93a4" font-family="Liberation Sans">600</text><line x1="62" y1="824.5" x2="505" y2="824.5" stroke="#e3e4e7" stroke-width="1" stroke-dasharray="4 4"/><text x="54" y="828.6666666666667" text-anchor="end" font-size="11.2" fill="#8a93a4" font-family="Liberation Sans">800</text><line x1="62" y1="788.5" x2="505" y2="788.5" stroke="#e3e4e7" stroke-width="1" stroke-dasharray="4 4"/><text x="54" y="792.3333333333333" text-anchor="end" font-size="11.2" fill="#8a93a4" font-family="Liberation Sans">1,000</text><line x1="62" y1="752.5" x2="505" y2="752.5" stroke="#e3e4e7" stroke-width="1" stroke-dasharray="4 4"/><text x="54" y="756.0" text-anchor="end" font-size="11.2" fill="#8a93a4" font-family="Liberation Sans">1,200</text><line x1="76.5" y1="970" x2="76.5" y2="975" stroke="#e4e7ec" stroke-width="1"/><text x="75.84375" y="987" text-anchor="middle" font-size="11.2" fill="#8a93a4" font-family="Liberation Sans">09:19</text><text x="75.84375" y="997.7" text-anchor="middle" font-size="11.2" fill="#8a93a4" font-family="Liberation Sans" letter-spacing="0.3">02–03</text><line x1="131.5" y1="970" x2="131.5" y2="975" stroke="#e4e7ec" stroke-width="1"/><text x="131.21875" y="987" text-anchor="middle" font-size="11.2" fill="#8a93a4" font-family="Liberation Sans">09:21</text><text x="131.21875" y="997.7" text-anchor="middle" font-size="11.2" fill="#8a93a4" font-family="Liberation Sans" letter-spacing="0.3">02–03</text><line x1="187.5" y1="970" x2="187.5" y2="975" stroke="#e4e7ec" stroke-width="1"/><text x="186.59375" y="987" text-anchor="middle" font-size="11.2" fill="#8a93a4" font-family="Liberation Sans">09:23</text><text x="186.59375" y="997.7" text-anchor="middle" font-size="11.2" fill="#8a93a4" font-family="Liberation Sans" letter-spacing="0.3">02–03</text><line x1="242.5" y1="970" x2="242.5" y2="975" stroke="#e4e7ec" stroke-width="1"/><text x="241.96875" y="987" text-anchor="middle" font-size="11.2" fill="#8a93a4" font-family="Liberation Sans">09:25</text><text x="241.96875" y="997.7" text-anchor="middle" font-size="11.2" fill="#8a93a4" font-family="Liberation Sans" letter-spacing="0.3">02–03</text><line x1="297.5" y1="970" x2="297.5" y2="975" stroke="#e4e7ec" stroke-width="1"/><text x="297.34375" y="987" text-anchor="middle" font-size="11.2" fill="#8a93a4" font-family="Liberation Sans">09:27</text><text x="297.34375" y="997.7" text-anchor="middle" font-size="11.2" fill="#8a93a4" font-family="Liberation Sans" letter-spacing="0.3">02–03</text><line x1="353.5" y1="970" x2="353.5" y2="975" stroke="#e4e7ec" stroke-width="1"/><text x="352.71875" y="987" text-anchor="middle" font-size="11.2" fill="#8a93a4" font-family="Liberation Sans">09:29</text><text x="352.71875" y="997.7" text-anchor="middle" font-size="11.2" fill="#8a93a4" font-family="Liberation Sans" letter-spacing="0.3">02–03</text><line x1="408.5" y1="970" x2="408.5" y2="975" stroke="#e4e7ec" stroke-width="1"/><text x="408.09375" y="987" text-anchor="middle" font-size="11.2" fill="#8a93a4" font-family="Liberation Sans">09:31</text><text x="408.09375" y="997.7" text-anchor="middle" font-size="11.2" fill="#8a93a4" font-family="Liberation Sans" letter-spacing="0.3">02–03</text><line x1="463.5" y1="970" x2="463.5" y2="975" stroke="#e4e7ec" stroke-width="1"/><text x="463.46875" y="987" text-anchor="middle" font-size="11.2" fill="#8a93a4" font-family="Liberation Sans">09:33</text><text x="463.46875" y="997.7" text-anchor="middle" font-size="11.2" fill="#8a93a4" font-family="Liberation Sans" letter-spacing="0.3">02–03</text><polygon points="75.84,970 75.84,970.00 103.53,970.00 131.22,970.00 158.91,970.00 186.59,970.00 214.28,787.61 241.97,787.61 269.66,787.61 297.34,787.79 325.03,787.79 352.72,787.79 380.41,787.79 408.09,787.97 435.78,787.97 463.47,788.33 491.16,788.88 491.16,970" fill="#f6556f" fill-opacity="0.4"/><polygon points="75.84,970 75.84,970.00 103.53,970.00 131.22,970.00 158.91,970.00 186.59,970.00 214.28,784.15 241.97,784.15 269.66,784.15 297.34,784.15 325.03,784.15 352.72,784.15 380.41,784.15 408.09,784.15 435.78,784.15 463.47,784.15 491.16,784.15 491.16,970" fill="#a0a7e6" fill-opacity="0.4"/><polyline points="75.84,970.00 103.53,970.00 131.22,970.00 158.91,970.00 186.59,970.00 214.28,787.61 241.97,787.61 269.66,787.61 297.34,787.79 325.03,787.79 352.72,787.79 380.41,787.79 408.09,787.97 435.78,787.97 463.47,788.33 491.16,788.88" fill="none" stroke="#f6556f" stroke-width="1.5" stroke-linejoin="round"/><polyline points="75.84,970.00 103.53,970.00 131.22,970.00 158.91,970.00 186.59,970.00 214.28,784.15 241.97,784.15 269.66,784.15 297.34,784.15 325.03,784.15 352.72,784.15 380.41,784.15 408.09,784.15 435.78,784.15 463.47,784.15 491.16,784.15" fill="none" stroke="#a0a7e6" stroke-width="1.5" stroke-linejoin="round"/></g></svg>
<div class="lg" style="left:550px;top:703.9px;background:#3495e6"></div>
<div class="lt" style="left:567.4px;top:702.79px;font-size:13.22px">/etc/hostname</div>
<div class="lg" style="left:661px;top:703.9px;background:#3fbcb4"></div>
<div class="lt" style="left:678.1px;top:702.65px;font-size:13.5px">/etc/hosts</div>
<div class="lg" style="left:747.3px;top:703.9px;background:#fbbe4d"></div>
<div class="lt" style="left:765px;top:702.69px;font-size:13.42px">/etc/resolv.conf</div>
<svg class="abs" style="left:0;top:0;overflow:visible" width="1585" height="983"><defs><clipPath id="c566752"><rect x="0" y="0" width="1585" height="953"/></clipPath></defs><g clip-path="url(#c566752)"><line x1="566" y1="970.5" x2="1023" y2="970.5" stroke="#e3e4e7" stroke-width="1" stroke-dasharray="4 4"/><text x="558" y="974.0" text-anchor="end" font-size="11.2" fill="#8a93a4" font-family="Liberation Sans">0</text><line x1="566" y1="938.5" x2="1023" y2="938.5" stroke="#e3e4e7" stroke-width="1" stroke-dasharray="4 4"/><text x="558" y="942.8571428571429" text-anchor="end" font-size="11.2" fill="#8a93a4" font-family="Liberation Sans">5</text><line x1="566" y1="907.5" x2="1023" y2="907.5" stroke="#e3e4e7" stroke-width="1" stroke-dasharray="4 4"/><text x="558" y="911.7142857142857" text-anchor="end" font-size="11.2" fill="#8a93a4" font-family="Liberation Sans">10</text><line x1="566" y1="876.5" x2="1023" y2="876.5" stroke="#e3e4e7" stroke-width="1" stroke-dasharray="4 4"/><text x="558" y="880.5714285714286" text-anchor="end" font-size="11.2" fill="#8a93a4" font-family="Liberation Sans">15</text><line x1="566" y1="845.5" x2="1023" y2="845.5" stroke="#e3e4e7" stroke-width="1" stroke-dasharray="4 4"/><text x="558" y="849.4285714285714" text-anchor="end" font-size="11.2" fill="#8a93a4" font-family="Liberation Sans">20</text><line x1="566" y1="814.5" x2="1023" y2="814.5" stroke="#e3e4e7" stroke-width="1" stroke-dasharray="4 4"/><text x="558" y="818.2857142857142" text-anchor="end" font-size="11.2" fill="#8a93a4" font-family="Liberation Sans">25</text><line x1="566" y1="783.5" x2="1023" y2="783.5" stroke="#e3e4e7" stroke-width="1" stroke-dasharray="4 4"/><text x="558" y="787.1428571428571" text-anchor="end" font-size="11.2" fill="#8a93a4" font-family="Liberation Sans">30</text><line x1="566" y1="752.5" x2="1023" y2="752.5" stroke="#e3e4e7" stroke-width="1" stroke-dasharray="4 4"/><text x="558" y="756.0" text-anchor="end" font-size="11.2" fill="#8a93a4" font-family="Liberation Sans">35</text><line x1="580.5" y1="970" x2="580.5" y2="975" stroke="#e4e7ec" stroke-width="1"/><text x="580.28125" y="987" text-anchor="middle" font-size="11.2" fill="#8a93a4" font-family="Liberation Sans">09:19</text><text x="580.28125" y="997.7" text-anchor="middle" font-size="11.2" fill="#8a93a4" font-family="Liberation Sans" letter-spacing="0.3">02–03</text><line x1="637.5" y1="970" x2="637.5" y2="975" stroke="#e4e7ec" stroke-width="1"/><text x="637.40625" y="987" text-anchor="middle" font-size="11.2" fill="#8a93a4" font-family="Liberation Sans">09:21</text><text x="637.40625" y="997.7" text-anchor="middle" font-size="11.2" fill="#8a93a4" font-family="Liberation Sans" letter-spacing="0.3">02–03</text><line x1="695.5" y1="970" x2="695.5" y2="975" stroke="#e4e7ec" stroke-width="1"/><text x="694.53125" y="987" text-anchor="middle" font-size="11.2" fill="#8a93a4" font-family="Liberation Sans">09:23</text><text x="694.53125" y="997.7" text-anchor="middle" font-size="11.2" fill="#8a93a4" font-family="Liberation Sans" letter-spacing="0.3">02–03</text><line x1="752.5" y1="970" x2="752.5" y2="975" stroke="#e4e7ec" stroke-width="1"/><text x="751.65625" y="987" text-anchor="middle" font-size="11.2" fill="#8a93a4" font-family="Liberation Sans">09:25</text><text x="751.65625" y="997.7" text-anchor="middle" font-size="11.2" fill="#8a93a4" font-family="Liberation Sans" letter-spacing="0.3">02–03</text><line x1="809.5" y1="970" x2="809.5" y2="975" stroke="#e4e7ec" stroke-width="1"/><text x="808.78125" y="987" text-anchor="middle" font-size="11.2" fill="#8a93a4" font-family="Liberation Sans">09:27</text><text x="808.78125" y="997.7" text-anchor="middle" font-size="11.2" fill="#8a93a4" font-family="Liberation Sans" letter-spacing="0.3">02–03</text><line x1="866.5" y1="970" x2="866.5" y2="975" stroke="#e4e7ec" stroke-width="1"/><text x="865.90625" y="987" text-anchor="middle" font-size="11.2" fill="#8a93a4" font-family="Liberation Sans">09:29</text><text x="865.90625" y="997.7" text-anchor="middle" font-size="11.2" fill="#8a93a4" font-family="Liberation Sans" letter-spacing="0.3">02–03</text><line x1="923.5" y1="970" x2="923.5" y2="975" stroke="#e4e7ec" stroke-width="1"/><text x="923.03125" y="987" text-anchor="middle" font-size="11.2" fill="#8a93a4" font-family="Liberation Sans">09:31</text><text x="923.03125" y="997.7" text-anchor="middle" font-size="11.2" fill="#8a93a4" font-family="Liberation Sans" letter-spacing="0.3">02–03</text><line x1="980.5" y1="970" x2="980.5" y2="975" stroke="#e4e7ec" stroke-width="1"/><text x="980.15625" y="987" text-anchor="middle" font-size="11.2" fill="#8a93a4" font-family="Liberation Sans">09:33</text><text x="980.15625" y="997.7" text-anchor="middle" font-size="11.2" fill="#8a93a4" font-family="Liberation Sans" letter-spacing="0.3">02–03</text><polyline points="580.28,970.00 608.84,970.00 637.41,970.00 665.97,970.00 694.53,970.00 723.09,758.10 751.66,758.10 780.22,758.10 808.78,758.10 837.34,758.10 865.91,758.10 894.47,758.10 923.03,758.10 951.59,758.10 980.16,758.10 1008.72,758.10" fill="none" stroke="#3495e6" stroke-width="1.3" stroke-linejoin="round"/><polyline points="580.28,970.00 608.84,970.00 637.41,970.00 665.97,970.00 694.53,970.00 723.09,757.57 751.66,757.57 780.22,757.57 808.78,757.57 837.34,757.57 865.91,757.57 894.47,757.57 923.03,757.57 951.59,757.57 980.16,757.57 1008.72,757.57" fill="none" stroke="#3fbcb4" stroke-width="1.3" stroke-linejoin="round"/><polyline points="580.28,970.00 608.84,970.00 637.41,970.00 665.97,970.00 694.53,970.00 723.09,758.10 751.66,758.10 780.22,758.10 808.78,758.10 837.34,758.10 865.91,758.10 894.47,758.10 923.03,758.10 951.59,758.10 980.16,758.10 1008.72,758.10" fill="none" stroke="#fbbe4d" stroke-width="1.3" stroke-linejoin="round"/></g></svg>
<div class="lg" style="left:1067.9px;top:703.9px;background:#f6556f"></div>
<div class="lt" style="left:1085.4px;top:703.85px;font-size:12.11px">meter_vm_disk_read</div>
<div class="lg" style="left:1208.6px;top:703.9px;background:#a0a7e6"></div>
<div class="lt" style="left:1225.5px;top:703.75px;font-size:12.31px">meter_vm_disk_written</div>
<svg class="abs" style="left:0;top:0;overflow:visible" width="1585" height="983"><defs><clipPath id="c1098752"><rect x="0" y="0" width="1585" height="953"/></clipPath></defs><g clip-path="url(#c1098752)"><line x1="1098.3" y1="970.5" x2="1541" y2="970.5" stroke="#e3e4e7" stroke-width="1" stroke-dasharray="4 4"/><text x="1090.3" y="974.0" text-anchor="end" font-size="11.2" fill="#8a93a4" font-family="Liberation Sans">0</text><line x1="1098.3" y1="926.5" x2="1541" y2="926.5" stroke="#e3e4e7" stroke-width="1" stroke-dasharray="4 4"/><text x="1090.3" y="930.4" text-anchor="end" font-size="11.2" fill="#8a93a4" font-family="Liberation Sans">300</text><line x1="1098.3" y1="882.5" x2="1541" y2="882.5" stroke="#e3e4e7" stroke-width="1" stroke-dasharray="4 4"/><text x="1090.3" y="886.8" text-anchor="end" font-size="11.2" fill="#8a93a4" font-family="Liberation Sans">600</text><line x1="1098.3" y1="839.5" x2="1541" y2="839.5" stroke="#e3e4e7" stroke-width="1" stroke-dasharray="4 4"/><text x="1090.3" y="843.2" text-anchor="end" font-size="11.2" fill="#8a93a4" font-family="Liberation Sans">900</text><line x1="1098.3" y1="795.5" x2="1541" y2="795.5" stroke="#e3e4e7" stroke-width="1" stroke-dasharray="4 4"/><text x="1090.3" y="799.6" text-anchor="end" font-size="11.2" fill="#8a93a4" font-family="Liberation Sans">1,200</text><line x1="1098.3" y1="752.5" x2="1541" y2="752.5" stroke="#e3e4e7" stroke-width="1" stroke-dasharray="4 4"/><text x="1090.3" y="756.0" text-anchor="end" font-size="11.2" fill="#8a93a4" font-family="Liberation Sans">1,500</text><line x1="1112.5" y1="970" x2="1112.5" y2="975" stroke="#e4e7ec" stroke-width="1"/><text x="1112.1343749999999" y="987" text-anchor="middle" font-size="11.2" fill="#8a93a4" font-family="Liberation Sans">09:19</text><text x="1112.1343749999999" y="997.7" text-anchor="middle" font-size="11.2" fill="#8a93a4" font-family="Liberation Sans" letter-spacing="0.3">02–03</text><line x1="1167.5" y1="970" x2="1167.5" y2="975" stroke="#e4e7ec" stroke-width="1"/><text x="1167.471875" y="987" text-anchor="middle" font-size="11.2" fill="#8a93a4" font-family="Liberation Sans">09:21</text><text x="1167.471875" y="997.7" text-anchor="middle" font-size="11.2" fill="#8a93a4" font-family="Liberation Sans" letter-spacing="0.3">02–03</text><line x1="1223.5" y1="970" x2="1223.5" y2="975" stroke="#e4e7ec" stroke-width="1"/><text x="1222.809375" y="987" text-anchor="middle" font-size="11.2" fill="#8a93a4" font-family="Liberation Sans">09:23</text><text x="1222.809375" y="997.7" text-anchor="middle" font-size="11.2" fill="#8a93a4" font-family="Liberation Sans" letter-spacing="0.3">02–03</text><line x1="1278.5" y1="970" x2="1278.5" y2="975" stroke="#e4e7ec" stroke-width="1"/><text x="1278.146875" y="987" text-anchor="middle" font-size="11.2" fill="#8a93a4" font-family="Liberation Sans">09:25</text><text x="1278.146875" y="997.7" text-anchor="middle" font-size="11.2" fill="#8a93a4" font-family="Liberation Sans" letter-spacing="0.3">02–03</text><line x1="1333.5" y1="970" x2="1333.5" y2="975" stroke="#e4e7ec" stroke-width="1"/><text x="1333.484375" y="987" text-anchor="middle" font-size="11.2" fill="#8a93a4" font-family="Liberation Sans">09:27</text><text x="1333.484375" y="997.7" text-anchor="middle" font-size="11.2" fill="#8a93a4" font-family="Liberation Sans" letter-spacing="0.3">02–03</text><line x1="1389.5" y1="970" x2="1389.5" y2="975" stroke="#e4e7ec" stroke-width="1"/><text x="1388.821875" y="987" text-anchor="middle" font-size="11.2" fill="#8a93a4" font-family="Liberation Sans">09:29</text><text x="1388.821875" y="997.7" text-anchor="middle" font-size="11.2" fill="#8a93a4" font-family="Liberation Sans" letter-spacing="0.3">02–03</text><line x1="1444.5" y1="970" x2="1444.5" y2="975" stroke="#e4e7ec" stroke-width="1"/><text x="1444.159375" y="987" text-anchor="middle" font-size="11.2" fill="#8a93a4" font-family="Liberation Sans">09:31</text><text x="1444.159375" y="997.7" text-anchor="middle" font-size="11.2" fill="#8a93a4" font-family="Liberation Sans" letter-spacing="0.3">02–03</text><line x1="1499.5" y1="970" x2="1499.5" y2="975" stroke="#e4e7ec" stroke-width="1"/><text x="1499.496875" y="987" text-anchor="middle" font-size="11.2" fill="#8a93a4" font-family="Liberation Sans">09:33</text><text x="1499.496875" y="997.7" text-anchor="middle" font-size="11.2" fill="#8a93a4" font-family="Liberation Sans" letter-spacing="0.3">02–03</text><polyline points="1112.13,970.00 1139.80,970.00 1167.47,970.00 1195.14,970.00 1222.81,970.00 1250.48,969.85 1278.15,969.85 1305.82,969.85 1333.48,969.85 1361.15,969.85 1388.82,969.85 1416.49,969.85 1444.16,969.85 1471.83,969.85 1499.50,969.85 1527.17,969.85" fill="none" stroke="#f6556f" stroke-width="1.5" stroke-linejoin="round"/><polyline points="1112.13,970.00 1139.80,970.00 1167.47,970.00 1195.14,970.00 1222.81,970.00 1250.48,952.56 1278.15,949.22 1305.82,938.46 1333.48,920.15 1361.15,901.84 1388.82,883.53 1416.49,865.21 1444.16,840.51 1471.83,820.89 1499.50,801.41 1527.17,777.43" fill="none" stroke="#a0a7e6" stroke-width="1.5" stroke-linejoin="round"/></g></svg>
<div id="foot"></div>
<div class="t" style="left:1115px;top:961.5px;font-family:'Liberation Mono',monospace;font-size:12px;letter-spacing:-0.69px;color:#3a4152;transform:scaleY(1.12);transform-origin:0 0">2021-02-03 09:19 ~ 2021-02-03 09:34</div>
<div class="t" style="left:1400px;top:962px;font-size:12.5px;color:#3e4554">En</div>
<div class="t" style="left:1429.5px;top:962px;font-size:12.2px;color:#3e4554">Server Zone UTC +&#8201;8</div>
<svg class="abs" style="left:0;top:978px" width="8" height="5" viewBox="0 0 8 5"><path d="M0 1 L1 1.2 L3 3 L7 5 H0Z" fill="#444" fill-opacity="0.85"/></svg>
</body></html>
